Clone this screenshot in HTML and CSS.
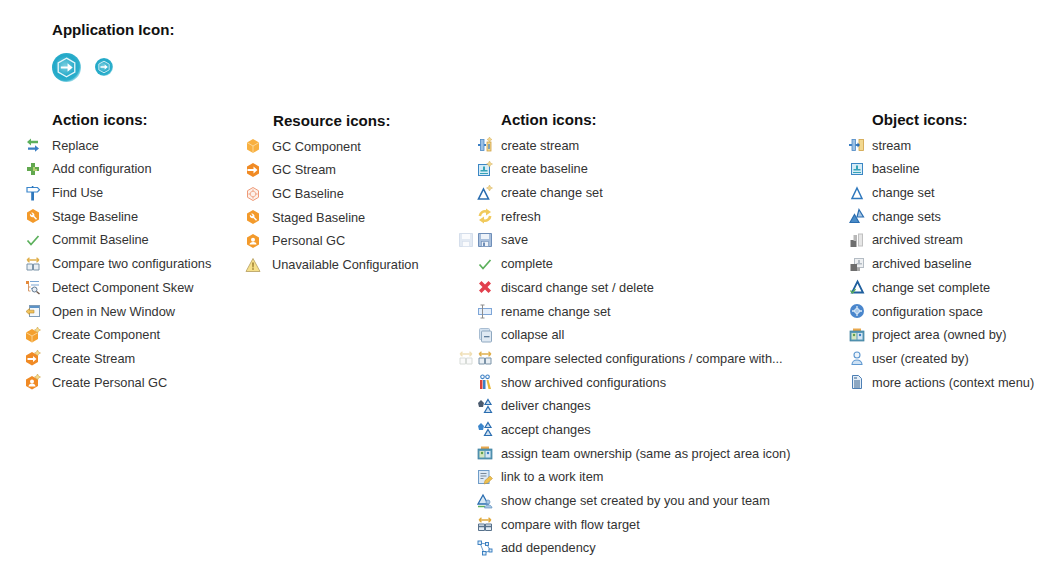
FILE: index.html
```html
<!DOCTYPE html>
<html lang="en">
<head>
  <meta charset="UTF-8" />
  <meta name="viewport" content="width=device-width, initial-scale=1.0"/>
  <title>Icon reference</title>
  <link rel="stylesheet" href="styles.css">
</head>
<body>

  <svg class="defs" width="0" height="0" aria-hidden="true">
    <defs>
      <radialGradient id="teal" cx="45%" cy="45%" r="55%">
        <stop offset="0" stop-color="#7ccfe0"/>
        <stop offset="0.65" stop-color="#22a8c8"/>
        <stop offset="0.9" stop-color="#2fb0cc"/>
        <stop offset="1" stop-color="#8ad4e4"/>
      </radialGradient>
      <symbol id="app" viewBox="0 0 28 28">
        <circle cx="14" cy="14" r="14" fill="url(#teal)"/>
        <path d="M14 5l8 4.500v9L14 23l-8-4.500v-9z" fill="none" stroke="#e4f5f9" stroke-width="1.300"/>
        <path d="M8.500 13h6.500v-3l5 4-5 4v-3H8.500z" fill="#fff"/>
      </symbol>
      <symbol id="replace" viewBox="0 0 16 16">
        <path d="M2 5l4-3.500v2.300h7v2.400H6v2.300z" fill="#5cb05c"/>
        <path d="M14 11.500l-4-3.200v2.100H3v2.300h7v2.100z" fill="#3b7fc4"/>
      </symbol>
      <symbol id="plus" viewBox="0 0 16 16">
        <path d="M6 2h4v4h4v4h-4v4H6v-4H2V6h4z" fill="#62a84f"/>
        <path d="M8 6h2v2h2v2H8z" fill="#b5cf74"/>
      </symbol>
      <symbol id="sign" viewBox="0 0 16 16">
        <path d="M2 2.500h10.500l2 2.200-2 2.300H2z" fill="#fff" stroke="#3b86cc" stroke-width="1.200"/>
        <rect x="6.200" y="7" width="2.800" height="8.500" fill="#2f78bd"/>
        <rect x="6.800" y="1" width="1.600" height="2" fill="#2f78bd"/>
      </symbol>
      <symbol id="stage" viewBox="0 0 16 16">
        <path d="M8 1l6 3.500v7L8 15l-6-3.500v-7z" fill="#f39a2b"/>
        <path d="M4.800 10.200l3.600 2.200" stroke="none"/>
        <path d="M5 5.800a2.600 2.600 0 0 0 3.300 3.300l2.700 2.700 1-1.100-2.700-2.600a2.600 2.600 0 0 0-3.200-3.400l1.700 1.600-.9.900z" fill="#fff"/>
      </symbol>
      <symbol id="check" viewBox="0 0 16 16">
        <path d="M2.500 8.500l3.500 4 7.500-8.500" fill="none" stroke="#5cb05c" stroke-width="1.700"/>
      </symbol>
      <symbol id="compare" viewBox="0 0 16 16">
        <path d="M2 4h12M2 4l2.500-2.200M2 4l2.500 2.200M14 4l-2.500-2.200M14 4l-2.500 2.200" fill="none" stroke="#e0b04e" stroke-width="1.300"/>
        <path d="M2 8h5.500v6H2zM8.500 8H14v6H8.500z" fill="#e9eff4" stroke="#7b93a8"/>
      </symbol>
      <symbol id="compare-soft" viewBox="0 0 16 16">
        <path d="M2 4h12M2 4l2.500-2.200M2 4l2.500 2.200M14 4l-2.500-2.200M14 4l-2.500 2.200" fill="none" stroke="#f0e0b8" stroke-width="1.300"/>
        <path d="M2 8h5.500v6H2zM8.500 8H14v6H8.500z" fill="#fafafa" stroke="#d8dcd8"/>
      </symbol>
      <symbol id="skew" viewBox="0 0 16 16">
        <path d="M1 2h3v3H1z" fill="#e58a3a"/>
        <path d="M5 2.500h9M6 6h8M6 9.500h2" stroke="#7aa6d4" stroke-width="1.200"/>
        <path d="M3.500 5v7h2M3.500 8h2" fill="none" stroke="#d69a6a"/>
        <circle cx="9.500" cy="10.500" r="2.500" fill="#e6eef6" stroke="#667c92"/>
        <path d="M11.500 12.500l3 2.500" stroke="#6e5a4e" stroke-width="1.400"/>
      </symbol>
      <symbol id="window" viewBox="0 0 16 16">
        <rect x="4.500" y="2.500" width="10" height="11" fill="#f4f8fb" stroke="#7f9cb8"/>
        <rect x="5" y="3" width="9" height="2" fill="#5c93c7"/>
        <path d="M1 8.500l3.500-3v1.700H9v2.800H4.500v1.700z" fill="#f1c25a" stroke="#b98a30" stroke-width=".6"/>
      </symbol>
      <symbol id="cube" viewBox="0 0 16 16">
        <path d="M8 1l6 3.500v7L8 15l-6-3.500v-7z" fill="#f8b040"/>
        <path d="M2 4.500L8 8l6-3.500M8 8v7" fill="none" stroke="#fde0a8" stroke-width=".8"/>
      </symbol>
      <symbol id="cube-new" viewBox="0 0 16 16">
        <path d="M7 2l6 3.500v6.500L7 15.500 1 12V5.500z" fill="#f4a02e"/>
        <path d="M1 5.500L7 9l6-3.500M7 9v6.500" fill="none" stroke="#fde0a8" stroke-width=".8"/>
        <path d="M12.500 0l1 2 2 1-2 1-1 2-1-2-2-1 2-1z" fill="#f6dc8c" stroke="#c89a3c" stroke-width=".5"/>
      </symbol>
      <symbol id="stream-new" viewBox="0 0 16 16">
        <path d="M7 2l6 3.500v6.500L7 15.500 1 12V5.500z" fill="#f08a24"/>
        <path d="M2.500 8h5.500v-2l3.500 3-3.500 3v-2H2.500z" fill="#fff"/>
        <path d="M12.500 0l1 2 2 1-2 1-1 2-1-2-2-1 2-1z" fill="#f6dc8c" stroke="#c89a3c" stroke-width=".5"/>
      </symbol>
      <symbol id="personal-new" viewBox="0 0 16 16">
        <path d="M7 2l6 3.500v6.500L7 15.500 1 12V5.500z" fill="#f08a24"/>
        <circle cx="7" cy="7.500" r="2" fill="#fff"/>
        <path d="M3.500 12.500c0-4 7-4 7 0z" fill="#fff"/>
        <path d="M12.500 0l1 2 2 1-2 1-1 2-1-2-2-1 2-1z" fill="#f6dc8c" stroke="#c89a3c" stroke-width=".5"/>
      </symbol>
      <symbol id="gc-stream" viewBox="0 0 16 16">
        <path d="M8 1l6 3.500v7L8 15l-6-3.500v-7z" fill="#f08a24"/>
        <path d="M2.500 7h6v-2.500l4 3.500-4 3.500v-2.500h-6z" fill="#fff"/>
      </symbol>
      <symbol id="gc-baseline" viewBox="0 0 16 16">
        <path d="M8 1.500l5.500 3.200v6.600L8 14.500l-5.500-3.200V4.700z" fill="#fdf1ea" stroke="#ef9a78"/>
        <circle cx="8" cy="8" r="2.800" fill="none" stroke="#f2b49a"/>
        <path d="M8 3.500v2M8 10.500v2M3.500 8h2M10.500 8h2" stroke="#ef9a78"/>
      </symbol>
      <symbol id="personal" viewBox="0 0 16 16">
        <path d="M8 1l6 3.500v7L8 15l-6-3.500v-7z" fill="#f39a2b"/>
        <circle cx="8" cy="6.800" r="2" fill="#fff"/>
        <path d="M4.500 11.500c0-3.500 7-3.500 7 0z" fill="#fff"/>
      </symbol>
      <symbol id="warn" viewBox="0 0 16 16">
        <path d="M8 1.500l7 13H1z" fill="#f6e08a" stroke="#c2ad72"/>
        <path d="M7.300 5.500h1.400l-.2 5h-1z" fill="#8a6a20"/>
        <rect x="7.300" y="11.300" width="1.400" height="1.400" fill="#8a6a20"/>
      </symbol>
      <symbol id="stream-new-blue" viewBox="0 0 16 16">
        <path d="M1 7h3v2H1zM6 7h3v2H6z" fill="#3b7fc4"/>
        <rect x="3.500" y="2.500" width="3.500" height="11" fill="#9cc0e4" stroke="#4d88c4" stroke-width=".8"/>
        <rect x="10" y="5" width="4" height="9" fill="#f2d890" stroke="#cfa144" stroke-width=".8"/>
        <path d="M11.400 7h1.200v5h-1.200z" fill="#3b7fc4"/>
        <path d="M12.500 0l.9 1.600 1.600.9-1.600.9-.9 1.600-.9-1.600-1.600-.9 1.600-.9z" fill="#f2d890" stroke="#cfa144" stroke-width=".4"/>
      </symbol>
      <symbol id="baseline-new" viewBox="0 0 16 16">
        <rect x="1.500" y="3.500" width="11" height="11" fill="#d6ecf7" stroke="#3b86c4"/>
        <path d="M6 5.500h2v3.500h2.500v1.500h-7V9H6zM3 12h8v1H3z" fill="#35a3b8"/>
        <path d="M12.500 0l1 2 2 1-2 1-1 2-1-2-2-1 2-1z" fill="#f2d890" stroke="#cfa144" stroke-width=".4"/>
      </symbol>
      <symbol id="change-new" viewBox="0 0 16 16">
        <path d="M6.500 4L11.500 14h-10z" fill="#fff" stroke="#2a6db0" stroke-width="1.600"/>
        <path d="M12.500 0l1 2 2 1-2 1-1 2-1-2-2-1 2-1z" fill="#f2d890" stroke="#cfa144" stroke-width=".4"/>
      </symbol>
      <symbol id="refresh" viewBox="0 0 16 16">
        <path d="M2.800 8a5.200 5.200 0 0 1 6.500-4.500" fill="none" stroke="#f1ca5c" stroke-width="2.600"/>
        <path d="M9 .5l5 3.500-5 3.500z" fill="#f1ca5c"/>
        <path d="M13.200 8a5.200 5.200 0 0 1-6.500 4.500" fill="none" stroke="#f1ca5c" stroke-width="2.600"/>
        <path d="M7 8.500l-5 3.500 5 3.500z" fill="#f1ca5c"/>
      </symbol>
      <symbol id="save" viewBox="0 0 16 16">
        <path d="M1.500 1.500h13v13h-13z" fill="#a8bfdc" stroke="#6f8eb8"/>
        <rect x="4" y="2" width="8" height="5" fill="#eef3f9"/>
        <rect x="4.500" y="9.500" width="7" height="5" fill="#eef3f9" stroke="#6f8eb8" stroke-width=".6"/>
        <rect x="6" y="10.500" width="2" height="3.500" fill="#6f8eb8"/>
      </symbol>
      <symbol id="save-soft" viewBox="0 0 16 16">
        <path d="M1.500 1.500h13v13h-13z" fill="#e3eaf3" stroke="#d5deeb"/>
        <rect x="4" y="2" width="8" height="5" fill="#fafbfd"/>
        <rect x="4.500" y="9.500" width="7" height="5" fill="#fafbfd" stroke="#d5deeb" stroke-width=".6"/>
      </symbol>
      <symbol id="discard" viewBox="0 0 16 16">
        <path d="M2 4.500L4.500 2 8 5.500 11.500 2 14 4.500 10.500 8 14 11.500 11.500 14 8 10.500 4.500 14 2 11.500 5.500 8z" fill="#e2404e"/>
      </symbol>
      <symbol id="rename" viewBox="0 0 16 16">
        <rect x="1.500" y="5.500" width="13" height="6" fill="#e4eefa" stroke="#7ea6d8"/>
        <path d="M3.500 2h4M3.500 15h4M5.500 2v13" fill="none" stroke="#8c8c8c"/>
      </symbol>
      <symbol id="collapse" viewBox="0 0 16 16">
        <rect x="2.500" y="1.500" width="10" height="11" rx="1" fill="#d4e2f0" stroke="#a8bdd2"/>
        <rect x="4.500" y="4" width="10" height="11" rx="1" fill="#dfe9f3" stroke="#8fa8c0"/>
        <rect x="7" y="9" width="5.500" height="1.300" fill="#5e7c9a"/>
      </symbol>
      <symbol id="archived-conf" viewBox="0 0 16 16">
        <circle cx="5.500" cy="2.800" r="1.800" fill="none" stroke="#3b7fc4" stroke-width="1.100"/>
        <circle cx="10.500" cy="2.800" r="1.800" fill="none" stroke="#3b7fc4" stroke-width="1.100"/>
        <rect x="3" y="6" width="2.500" height="9" fill="#d8413c"/>
        <rect x="6" y="6" width="2.500" height="9" fill="#3b7fc4"/>
        <path d="M9.500 6h2L14 15h-2.500z" fill="#e8b83c"/>
      </symbol>
      <symbol id="deliver" viewBox="0 0 16 16">
        <path d="M11 1.500l3 5H8zM11 8.500l3.500 6H7.500z" fill="#cfe0f0" stroke="#2a6db0" stroke-width="1.200"/>
        <path d="M1 5l3-3 3 3-1 4H2z" fill="#4a5a6e"/>
      </symbol>
      <symbol id="accept" viewBox="0 0 16 16">
        <path d="M11 1.500l3 5H8zM11 8.500l3.500 6H7.500z" fill="#cfe0f0" stroke="#2a6db0" stroke-width="1.200"/>
        <path d="M1 5l3-3 3 3-1 4H2z" fill="#3b86cc"/>
      </symbol>
      <symbol id="team" viewBox="0 0 16 16">
        <path d="M4 1.500h8v2.500H4z" fill="#e8a84e"/>
        <rect x="1" y="4" width="14" height="10" fill="#5b9bb8" stroke="#3a7d9c" stroke-width=".7"/>
        <rect x="2.500" y="6" width="5" height="6.500" fill="#d4e6c0"/>
        <rect x="8.500" y="6" width="5" height="6.500" fill="#d6e6f4"/>
        <circle cx="5" cy="8" r="1.200" fill="#5e9e4c"/>
        <circle cx="11" cy="8" r="1.200" fill="#3b7fc4"/>
      </symbol>
      <symbol id="work-item" viewBox="0 0 16 16">
        <rect x="1.500" y="1.500" width="10.500" height="13" fill="#dce9f6" stroke="#6f9cc8"/>
        <path d="M3.500 4.500h6M3.500 7h6M3.500 9.500h3" stroke="#7a8a9a"/>
        <path d="M7 15l1-3.500 5-4.500 2.500 2.500-5 4.500z" fill="#eec04e" stroke="#b98a30" stroke-width=".5"/>
      </symbol>
      <symbol id="team-set" viewBox="0 0 16 16">
        <path d="M6 2L11 11H1z" fill="#d8e8f4" stroke="#2a6db0" stroke-width="1.300"/>
        <path d="M1 13.500h7" stroke="#5cb05c" stroke-width="1.500"/>
        <circle cx="11" cy="9" r="2" fill="#a8c6e4" stroke="#5f8fbd" stroke-width=".7"/>
        <path d="M7.500 15c0-4 7.500-4 7.500 0z" fill="#a8c6e4" stroke="#5f8fbd" stroke-width=".7"/>
      </symbol>
      <symbol id="flow" viewBox="0 0 16 16">
        <path d="M2 4h12M2 4l2.500-2.200M2 4l2.500 2.200M14 4l-2.500-2.200M14 4l-2.500 2.200" fill="none" stroke="#e0a93c" stroke-width="1.300"/>
        <path d="M1.500 8h6v6.500h-6zM8.500 8h6v6.500h-6z" fill="#e2ebf3" stroke="#58728c"/>
        <path d="M1.500 10.500h6M8.500 10.500h6" stroke="#58728c" stroke-width="1.400"/>
      </symbol>
      <symbol id="dependency" viewBox="0 0 16 16">
        <path d="M3 3l6.500 1M3 3l4 10M9.500 4l4 6.500M7 13l6.500-2.500" fill="none" stroke="#6a9ccc"/>
        <rect x="1" y="1" width="3.500" height="3.500" fill="#dcebf8" stroke="#2f78bd" stroke-width=".9"/>
        <rect x="8.500" y="2.500" width="3" height="3" fill="#dcebf8" stroke="#2f78bd" stroke-width=".9"/>
        <rect x="5.500" y="11.500" width="3.500" height="3.500" fill="#dcebf8" stroke="#2f78bd" stroke-width=".9"/>
        <rect x="12" y="9" width="3" height="3" fill="#dcebf8" stroke="#2f78bd" stroke-width=".9"/>
      </symbol>
      <symbol id="stream" viewBox="0 0 16 16">
        <path d="M0 7h3v2H0zM5 7h5v2H5z" fill="#3b7fc4"/>
        <rect x="3" y="2.500" width="3.500" height="11" fill="#9cc0e4" stroke="#4d88c4" stroke-width=".8"/>
        <rect x="10" y="2.500" width="4.500" height="11" fill="#f2d890" stroke="#cfa144" stroke-width=".8"/>
        <path d="M8.500 5.500l2.500 2.500-2.500 2.500z" fill="#2a6db0"/>
      </symbol>
      <symbol id="baseline" viewBox="0 0 16 16">
        <rect x="2.500" y="2.500" width="11" height="11" fill="#d6ecf7" stroke="#3b86c4"/>
        <path d="M7 4.500h2v3.500h2.500v1.500h-7V8H7zM4 11h8v1H4z" fill="#35a3b8"/>
      </symbol>
      <symbol id="change" viewBox="0 0 16 16">
        <path d="M8 3l5 10.500H3z" fill="#fff" stroke="#2f78bd" stroke-width="1.500"/>
      </symbol>
      <symbol id="changes" viewBox="0 0 16 16">
        <path d="M10 1.500l4.500 7.500H8z" fill="#a8c6e4" stroke="#2a6db0" stroke-width="1.200"/>
        <path d="M5.500 6.500l4.500 8H1z" fill="#4a8cc8" stroke="#2a6db0" stroke-width="1.200"/>
      </symbol>
      <symbol id="arch-stream" viewBox="0 0 16 16">
        <rect x="1.500" y="8" width="6" height="7" fill="#6e6e6e"/>
        <rect x="4.500" y="3" width="3.500" height="6" fill="#b8b8b8"/>
        <rect x="9.500" y="2" width="4" height="12" fill="#e6e6e6" stroke="#c0c0c0"/>
      </symbol>
      <symbol id="arch-baseline" viewBox="0 0 16 16">
        <rect x="5.500" y="2.500" width="9" height="9" fill="#eef0f2" stroke="#b4bcc4"/>
        <path d="M9 4h2v3h2v1.500H7.500V7H9z" fill="#b4bcc4"/>
        <rect x="1.500" y="8" width="6.500" height="7" fill="#6e6e6e"/>
        <rect x="8" y="11.500" width="3" height="3.500" fill="#a8a8a8"/>
      </symbol>
      <symbol id="change-done" viewBox="0 0 16 16">
        <path d="M8.500 2.500l5.500 11H3z" fill="#fff" stroke="#1f5f9e" stroke-width="1.800"/>
        <path d="M1.500 11.500l2 2.500 3-4" fill="none" stroke="#5cb05c" stroke-width="1.300"/>
      </symbol>
      <symbol id="space" viewBox="0 0 16 16">
        <circle cx="8" cy="8" r="7" fill="#4a86cc"/>
        <path d="M8 3v10M3 8h10" stroke="#dcebf8" stroke-width="1.300"/>
        <circle cx="8" cy="8" r="2.500" fill="#a8c8ea" stroke="#dcebf8"/>
      </symbol>
      <symbol id="user" viewBox="0 0 16 16">
        <circle cx="8" cy="5" r="3" fill="#eef5fb" stroke="#5f98d0" stroke-width="1.100"/>
        <path d="M3 14.500c0-6 10-6 10 0z" fill="#cfe2f4" stroke="#5f98d0" stroke-width="1.100"/>
      </symbol>
      <symbol id="more" viewBox="0 0 16 16">
        <path d="M3.500 1.500h6l3 3v10h-9z" fill="#e4eef8" stroke="#4d7fb4"/>
        <path d="M5 4h3M5 7h6M5 9h6M5 11h6M5 13h6" stroke="#35608c"/>
      </symbol>
    </defs>
  </svg>

  <h1 class="title">Application Icon:</h1>
  <div class="app-icons">
    <svg class="app-large"><use href="#app"/></svg>
    <svg class="app-small"><use href="#app"/></svg>
  </div>

  <div class="columns">

    <section class="col col-actions">
      <h2>Action icons:</h2>
      <ul>
        <li><svg><use href="#replace"/></svg>Replace</li>
        <li><svg><use href="#plus"/></svg>Add configuration</li>
        <li><svg><use href="#sign"/></svg>Find Use</li>
        <li><svg><use href="#stage"/></svg>Stage Baseline</li>
        <li><svg><use href="#check"/></svg>Commit Baseline</li>
        <li><svg><use href="#compare"/></svg>Compare two configurations</li>
        <li><svg><use href="#skew"/></svg>Detect Component Skew</li>
        <li><svg><use href="#window"/></svg>Open in New Window</li>
        <li><svg><use href="#cube-new"/></svg>Create Component</li>
        <li><svg><use href="#stream-new"/></svg>Create Stream</li>
        <li><svg><use href="#personal-new"/></svg>Create Personal GC</li>
      </ul>
    </section>

    <section class="col col-resources">
      <h2>Resource icons:</h2>
      <ul>
        <li><svg><use href="#cube"/></svg>GC Component</li>
        <li><svg><use href="#gc-stream"/></svg>GC Stream</li>
        <li><svg><use href="#gc-baseline"/></svg>GC Baseline</li>
        <li><svg><use href="#stage"/></svg>Staged Baseline</li>
        <li><svg><use href="#personal"/></svg>Personal GC</li>
        <li><svg><use href="#warn"/></svg>Unavailable Configuration</li>
      </ul>
    </section>

    <section class="col col-more">
      <h2>Action icons:</h2>
      <ul>
        <li><svg><use href="#stream-new-blue"/></svg>create stream</li>
        <li><svg><use href="#baseline-new"/></svg>create baseline</li>
        <li><svg><use href="#change-new"/></svg>create change set</li>
        <li><svg><use href="#refresh"/></svg>refresh</li>
        <li><svg class="spare"><use href="#save-soft"/></svg><svg><use href="#save"/></svg>save</li>
        <li><svg><use href="#check"/></svg>complete</li>
        <li><svg><use href="#discard"/></svg>discard change set / delete</li>
        <li><svg><use href="#rename"/></svg>rename change set</li>
        <li><svg><use href="#collapse"/></svg>collapse all</li>
        <li><svg class="spare"><use href="#compare-soft"/></svg><svg><use href="#compare"/></svg>compare selected configurations / compare with...</li>
        <li><svg><use href="#archived-conf"/></svg>show archived configurations</li>
        <li><svg><use href="#deliver"/></svg>deliver changes</li>
        <li><svg><use href="#accept"/></svg>accept changes</li>
        <li><svg><use href="#team"/></svg>assign team ownership (same as project area icon)</li>
        <li><svg><use href="#work-item"/></svg>link to a work item</li>
        <li><svg><use href="#team-set"/></svg>show change set created by you and your team</li>
        <li><svg><use href="#flow"/></svg>compare with flow target</li>
        <li><svg><use href="#dependency"/></svg>add dependency</li>
      </ul>
    </section>

    <section class="col col-objects">
      <h2>Object icons:</h2>
      <ul>
        <li><svg><use href="#stream"/></svg>stream</li>
        <li><svg><use href="#baseline"/></svg>baseline</li>
        <li><svg><use href="#change"/></svg>change set</li>
        <li><svg><use href="#changes"/></svg>change sets</li>
        <li><svg><use href="#arch-stream"/></svg>archived stream</li>
        <li><svg><use href="#arch-baseline"/></svg>archived baseline</li>
        <li><svg><use href="#change-done"/></svg>change set complete</li>
        <li><svg><use href="#space"/></svg>configuration space</li>
        <li><svg><use href="#team"/></svg>project area (owned by)</li>
        <li><svg><use href="#user"/></svg>user (created by)</li>
        <li><svg><use href="#more"/></svg>more actions (context menu)</li>
      </ul>
    </section>

  </div>

</body>
</html>
```

FILE: styles.css
```css
:root {
  --text: #333333;
  --heading: #111111;
  --row: 23.7px;
}

body {
  margin: 0;
  padding-top: 18px;
  background: #ffffff;
  color: var(--text);
  font-family: 'Liberation Sans', Arial, sans-serif;
  font-size: 12.8px;
}

.defs {
  position: absolute;
}

h1, h2 {
  margin: 0;
  color: var(--heading);
  font-size: 15.1px;
  font-weight: bold;
  line-height: 24px;
}

.title {
  margin-left: 52px;
}

.app-icons {
  display: flex;
  align-items: center;
  gap: 14px;
  height: 28px;
  margin: 11px 0 27px 52px;
}

.app-large {
  width: 29px;
  height: 29px;
}

.app-small {
  width: 18px;
  height: 18px;
}

.columns {
  display: flex;
}

.col h2 {
  margin-bottom: 1.4px;
}

.col ul {
  margin: 0;
  padding: 0;
  list-style: none;
}

.col li {
  display: flex;
  align-items: center;
  height: var(--row);
  white-space: nowrap;
}

.col li svg {
  flex: none;
  width: 16px;
  height: 16px;
  margin-right: 11px;
}

.col-actions {
  width: 245px;
  padding-left: 25px;
  box-sizing: border-box;
}

.col-actions h2 {
  margin-left: 27px;
}

.col-resources {
  width: 213px;
  margin: 1px 0 0 0;
}

.col-resources h2 {
  margin-left: 28px;
}

.col-more {
  width: 391px;
  padding-left: 19px;
  box-sizing: border-box;
}

.col-more h2 {
  margin-left: 24px;
}

.col-more li {
  position: relative;
}

.col-more li svg {
  margin-right: 8px;
}

/* faded twin of the icon, hangs to the left of the row */
.col-more li svg.spare {
  position: absolute;
  left: -19px;
}

.col-objects h2 {
  margin-left: 23px;
}

.col-objects li svg {
  margin-right: 7px;
}
```
